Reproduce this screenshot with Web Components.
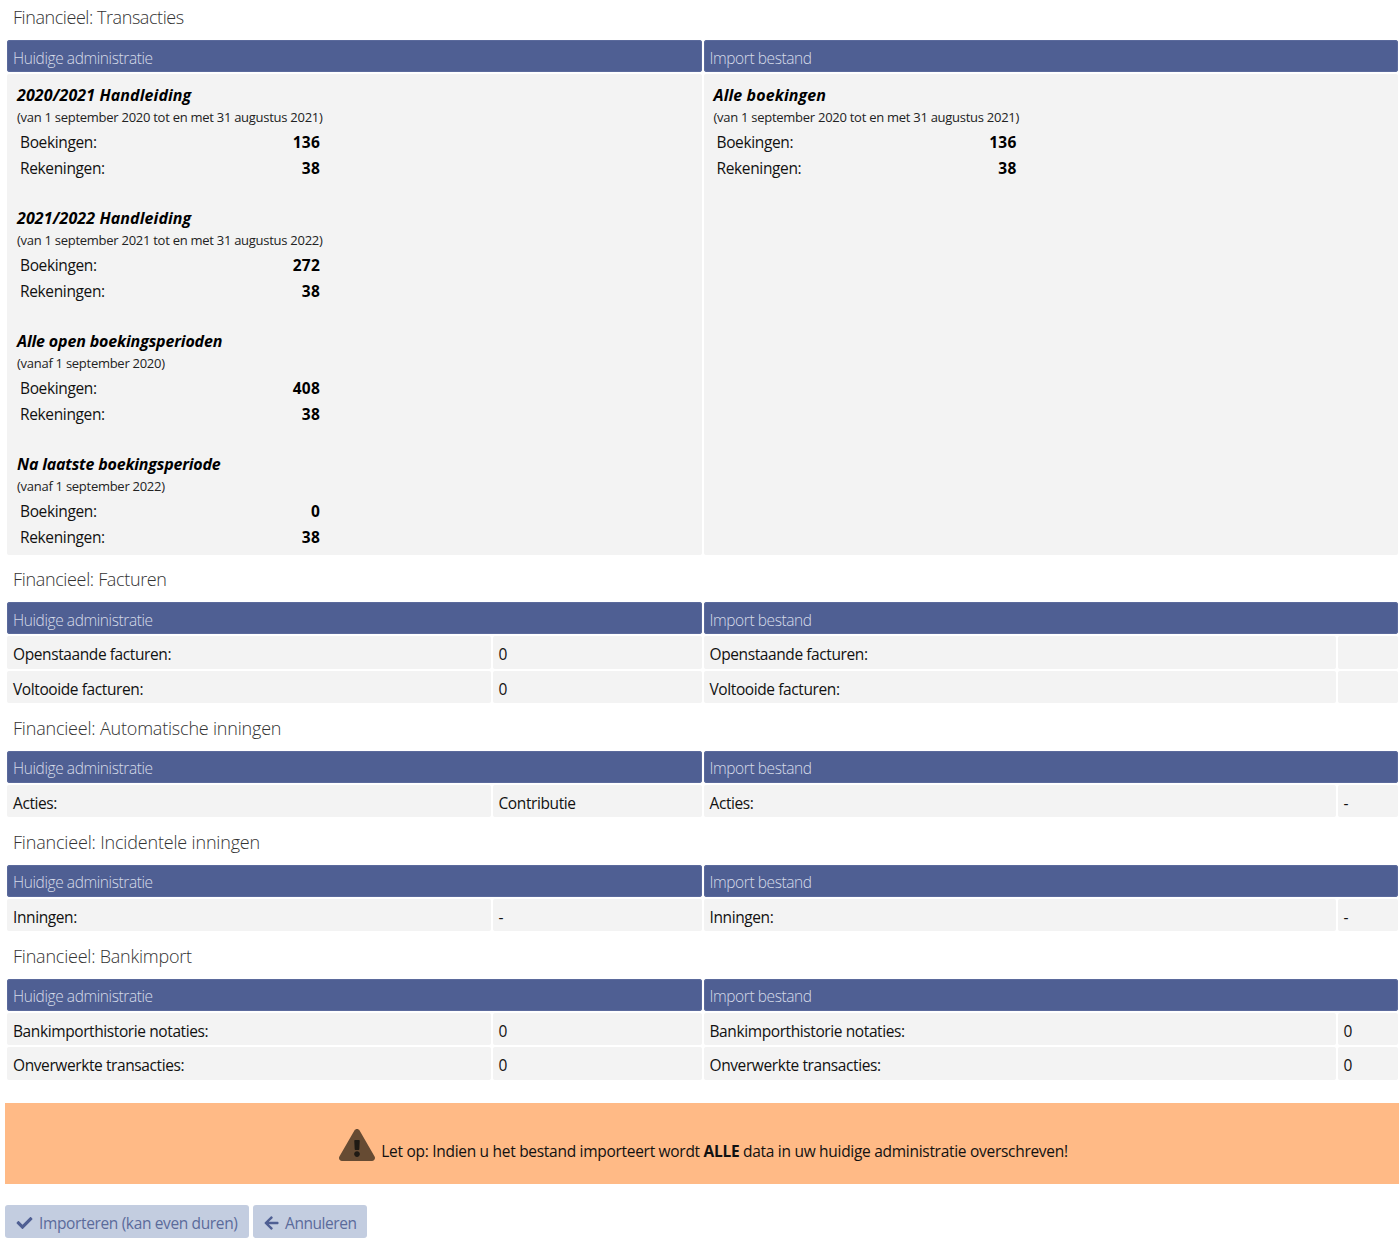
<!DOCTYPE html>
<html><head><meta charset="utf-8"><style>
html,body{margin:0;background:#fff}
body{font-family:"Open Sans","Noto Sans",sans-serif;color:#000;width:1399px;overflow-x:hidden}
</style></head><body>
<template id="t-section"><style>
:host{display:block;padding-left:7px;width:1392px}
h2{margin:0;font-weight:300;font-size:18px;line-height:24px;color:#333;padding:var(--tp,10.25px) 0 11px 6px;letter-spacing:var(--ls,-.3px)}
.g{display:grid;grid-template-columns:695px 694.5px;column-gap:1.5px}
.h{background:#4f5f93;box-shadow:inset 0 0 0 1px #5b6a9c;color:#d6dbe9;border-radius:3px;height:32px;line-height:var(--hl,35.5px);padding-left:6px;font-size:15.5px;font-weight:300;letter-spacing:-.41px;margin-bottom:2px}
</style><h2><slot name="title"></slot></h2><div class="g"><div class="h">Huidige administratie</div><div class="h">Import bestand</div><slot></slot></div></template>
<template id="t-panel"><style>
:host{display:block;background:#f3f3f3;border-radius:2px;padding:4px 9px 0 10px;height:481px;box-sizing:border-box;margin-bottom:2px}
</style><slot></slot></template>
<template id="t-period"><style>
:host{display:block;margin-bottom:21px}
:host(:last-child){margin-bottom:0}
.t{font-weight:700;font-style:italic;font-size:16px;line-height:22px;letter-spacing:var(--tl,.1px);padding-top:6px}
.s{font-size:13px;line-height:22px;letter-spacing:-.27px;color:#222;margin-bottom:1px}
.r{display:flex;justify-content:space-between;width:303px;padding:0 0 0 3px;box-sizing:border-box;height:25.5px;line-height:26px;font-size:15.5px;letter-spacing:-.36px;color:#111}
b{font-weight:700;letter-spacing:.2px;color:#000}
</style><div class="t"><slot name="t"></slot></div><div class="s"><slot name="s"></slot></div>
<div class="r"><span>Boekingen:</span><b><slot name="b"></slot></b></div><div class="r"><span>Rekeningen:</span><b><slot name="r"></slot></b></div></template>
<template id="t-row"><style>
:host{display:grid;grid-template-columns:var(--c,483.5px) 1fr;column-gap:2px;margin-bottom:2px;font-size:15.5px;letter-spacing:-.4px;color:#111}
div{background:#f3f3f3;border-radius:2px;height:32.5px;line-height:37px;padding-left:6px;white-space:nowrap}
</style><div><slot></slot></div><div><slot name="v"></slot></div></template>
<template id="t-alert"><style>
:host{display:flex;align-items:flex-end;justify-content:center;box-sizing:border-box;background:#ffba86;width:1394px;height:81px;margin:21px 0 0 5px;padding:0 0 21px 3px;font-size:15.5px;letter-spacing:-.29px;color:#111}
svg{width:36px;height:32px;margin-right:6px;flex:none;margin-bottom:2px}
span{line-height:24px}b{font-weight:700}
</style><svg viewBox="0 0 576 512"><path fill="#664b33" d="M569.5 440C588 472 564.800 512 527.900 512H48.100c-36.900 0-60-40-41.600-72L246.400 24c18.500-32 64.700-32 83.200 0l239.900 416z"/><path fill="#1f1a14" d="M288 354c-25 0-46 21-46 46s21 46 46 46 46-21 46-46-21-46-46-46zM244 188l7 136c.4 6.400 5.700 11 12 11h50c6.300 0 11.600-4.600 12-11l7-136c.4-6.900-5.100-12-12-12h-64c-6.900 0-12.400 5.100-12 12z"/></svg><span><slot></slot></span></template>
<template id="t-btn"><style>
:host{display:inline-flex;align-items:center;height:33px;box-sizing:border-box;background:#c3cde0;border-radius:3px;color:#5b6b9b;font-size:15.5px;padding:3px 11px 0 11px;letter-spacing:var(--bl,-.36px);white-space:nowrap}
::slotted(svg){margin-right:var(--ig,6px);fill:#4f5f93;flex:none}
</style><slot name="i"></slot><slot></slot></template>
<template id="t-bar"><style>
:host{display:flex;gap:4px;margin:21px 0 0 5px}
</style><slot></slot></template>
<script>
for(const n of ['section','panel','period','row','alert','btn','bar']){
customElements.define('x-'+n,class extends HTMLElement{constructor(){super();this.attachShadow({mode:'open'}).append(document.getElementById('t-'+n).content.cloneNode(true))}})}
</script>
<x-section style="--tp:5px;--ls:-.44px;--hl:36.500px"><span slot="title">Financieel: Transacties</span>
<x-panel>
<x-period><span slot="t">2020/2021 Handleiding</span><span slot="s">(van 1 september 2020 tot en met 31 augustus 2021)</span><span slot="b">136</span><span slot="r">38</span></x-period>
<x-period><span slot="t">2021/2022 Handleiding</span><span slot="s">(van 1 september 2021 tot en met 31 augustus 2022)</span><span slot="b">272</span><span slot="r">38</span></x-period>
<x-period style="--tl:-.15px"><span slot="t">Alle open boekingsperioden</span><span slot="s">(vanaf 1 september 2020)</span><span slot="b">408</span><span slot="r">38</span></x-period>
<x-period style="--tl:-.19px"><span slot="t">Na laatste boekingsperiode</span><span slot="s">(vanaf 1 september 2022)</span><span slot="b">0</span><span slot="r">38</span></x-period>
</x-panel>
<x-panel><x-period><span slot="t">Alle boekingen</span><span slot="s">(van 1 september 2020 tot en met 31 augustus 2021)</span><span slot="b">136</span><span slot="r">38</span></x-period></x-panel>
</x-section>
<x-section style="--ls:-.35px;--hl:36.500px"><span slot="title">Financieel: Facturen</span>
<x-row>Openstaande facturen:<span slot="v">0</span></x-row><x-row style="--c:632px">Openstaande facturen:</x-row>
<x-row>Voltooide facturen:<span slot="v">0</span></x-row><x-row style="--c:632px">Voltooide facturen:</x-row>
</x-section>
<x-section style="--ls:-.2px"><span slot="title">Financieel: Automatische inningen</span>
<x-row>Acties:<span slot="v">Contributie</span></x-row><x-row style="--c:632px">Acties:<span slot="v">-</span></x-row>
</x-section>
<x-section style="--ls:-.18px;--tp:10.5px"><span slot="title">Financieel: Incidentele inningen</span>
<x-row>Inningen:<span slot="v">-</span></x-row><x-row style="--c:632px">Inningen:<span slot="v">-</span></x-row>
</x-section>
<x-section style="--ls:-.22px;--tp:10.5px"><span slot="title">Financieel: Bankimport</span>
<x-row>Bankimporthistorie notaties:<span slot="v">0</span></x-row><x-row style="--c:632px">Bankimporthistorie notaties:<span slot="v">0</span></x-row>
<x-row>Onverwerkte transacties:<span slot="v">0</span></x-row><x-row style="--c:632px">Onverwerkte transacties:<span slot="v">0</span></x-row>
</x-section>
<x-alert>Let op: Indien u het bestand importeert wordt <b>ALLE</b> data in uw huidige administratie overschreven!</x-alert>
<x-bar>
<x-btn><svg slot="i" width="17" height="16" viewBox="0 0 512 512"><path d="M173.900 439.400l-166.400-166.400c-10-10-10-26.200 0-36.200l36.200-36.200c10-10 26.200-10 36.200 0L192 312.700 432.100 72.600c10-10 26.200-10 36.200 0l36.200 36.200c10 10 10 26.200 0 36.200l-294.400 294.400c-10 10-26.200 10-36.200 0z"/></svg>Importeren (kan even duren)</x-btn>
<x-btn style="--bl:-.45px;--ig:6.500px"><svg slot="i" width="15" height="16" viewBox="0 0 448 512"><path d="M257.500 445.100l-22.200 22.200c-9.400 9.400-24.600 9.400-33.900 0L7 273c-9.400-9.400-9.400-24.600 0-33.900L201.400 44.700c9.400-9.400 24.600-9.400 33.900 0l22.200 22.200c9.500 9.500 9.300 25-.4 34.300L136.600 216H424c13.300 0 24 10.700 24 24v32c0 13.300-10.700 24-24 24H136.600l120.500 114.800c9.800 9.300 10 24.800.4 34.300z"/></svg>Annuleren</x-btn>
</x-bar>
</body></html>
